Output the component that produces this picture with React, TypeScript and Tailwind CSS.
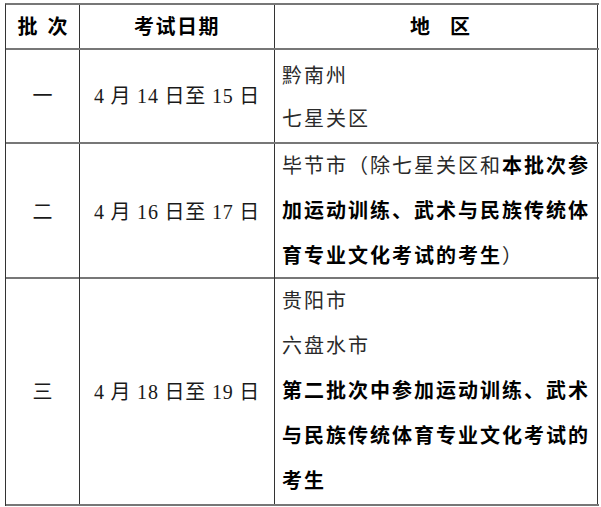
const cjk = 'font-["Liberation_Serif","Noto_Sans_CJK_SC",serif]'

function Cell({ children, className = '' }: { children?: React.ReactNode; className?: string }) {
  return <div className={`border-r border-[#333] ${className}`}>{children}</div>
}

function Row({ children, className = '' }: { children: React.ReactNode; className?: string }) {
  return (
    <div className={`grid grid-cols-[74px_195px_323px] border-b-2 border-[#777] ${className}`}>
      {children}
    </div>
  )
}

function DateText({ from, to }: { from: number; to: number }) {
  return (
    <div className="h-full flex items-center justify-center text-[20px] tracking-[0.8px] text-[#1a1a1a] whitespace-pre">
      {`4 月 ${from} 日至 ${to} 日`}
    </div>
  )
}

function Batch({ label }: { label: string }) {
  return <div className="h-full flex items-center justify-center text-[20px] text-[#1a1a1a]">{label}</div>
}

export default function App() {
  return (
    <div className={`min-h-screen bg-white pt-[3px] pl-[5px] ${cjk}`}>
      <div className="w-[594px] border-l border-t-2 border-l-[#333] border-t-[#777]">
        {/* header */}
        <Row className="h-[45px]">
          <Cell className="flex items-center justify-center text-[20px] font-bold text-black whitespace-pre">批  次</Cell>
          <Cell className="flex items-center justify-center text-[20px] font-bold tracking-[1.5px] text-black">考试日期</Cell>
          <Cell className="flex items-center justify-center text-[20px] font-bold text-black whitespace-pre pl-2">地　区</Cell>
        </Row>

        <Row className="h-[94px]">
          <Cell><Batch label="一" /></Cell>
          <Cell><DateText from={14} to={15} /></Cell>
          <Cell className="pl-[7px] pt-[5px] text-[20px] leading-[43px] tracking-[2px] text-[#2a2a2a]">
            <div>黔南州</div>
            <div>七星关区</div>
          </Cell>
        </Row>

        <Row className="h-[135px]">
          <Cell><Batch label="二" /></Cell>
          <Cell><DateText from={16} to={17} /></Cell>
          <Cell className="pl-[7px] text-[20px] leading-[45px] tracking-[2px] text-[#2a2a2a] whitespace-nowrap">
            <div>
              毕节市（除七星关区和<b className="text-black">本批次参</b>
            </div>
            <div className="font-bold text-black">加运动训练、武术与民族传统体</div>
            <div>
              <b className="text-black">育专业文化考试的考生</b>）
            </div>
          </Cell>
        </Row>

        <Row className="h-[227px]">
          <Cell><Batch label="三" /></Cell>
          <Cell><DateText from={18} to={19} /></Cell>
          <Cell className="pl-[7px] text-[20px] leading-[45px] tracking-[2px] text-[#2a2a2a] whitespace-nowrap">
            <div>贵阳市</div>
            <div>六盘水市</div>
            <div className="font-bold text-black">第二批次中参加运动训练、武术</div>
            <div className="font-bold text-black">与民族传统体育专业文化考试的</div>
            <div className="font-bold text-black">考生</div>
          </Cell>
        </Row>
      </div>
    </div>
  )
}
